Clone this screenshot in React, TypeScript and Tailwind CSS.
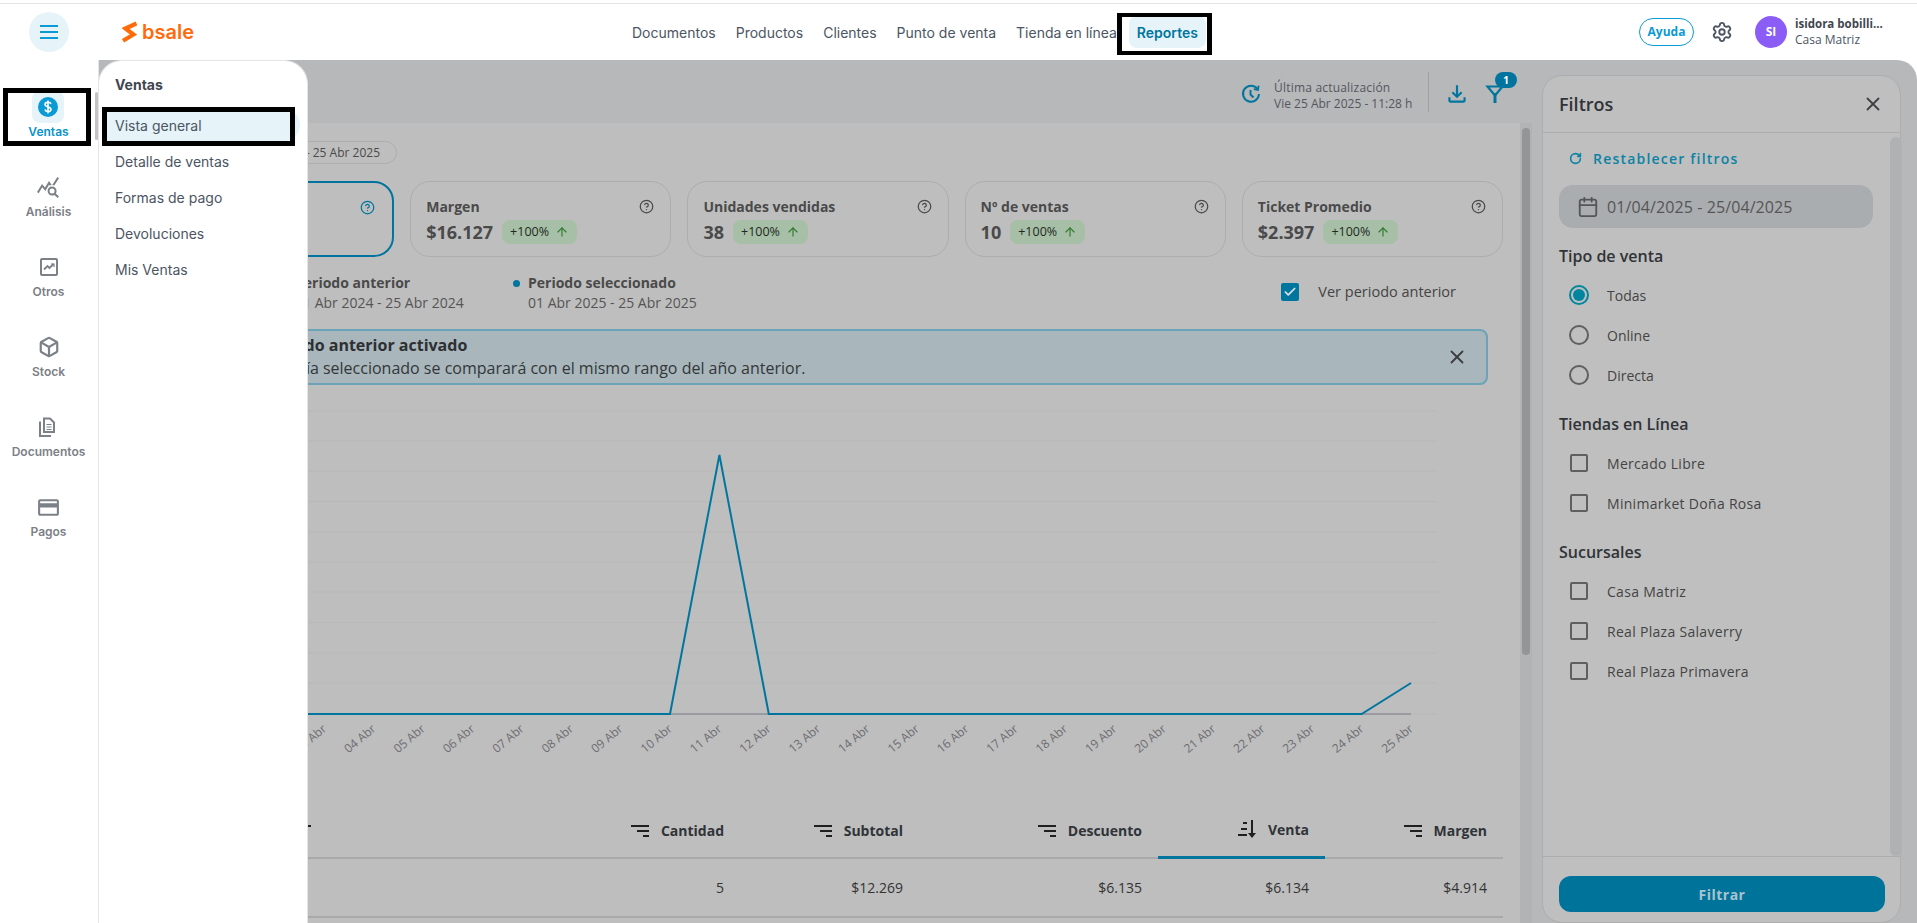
import React from "react";
import { ArrowUp, Box, CircleHelp, RotateCw, Settings, X, Calendar, Check } from "lucide-react";
import { MdCreditCard, MdQueryStats, MdOutlineFileDownload } from "react-icons/md";

const inter = "font-['Inter',sans-serif]";
const noto = "font-['Open_Sans',sans-serif]";

const Logo = () => (
  <div className="flex items-center ml-[53px] w-[71px] text-[#ff6b0a]">
    <svg width="15" height="22" viewBox="0 0 15 22" fill="none" stroke="currentColor" strokeWidth="4.2" className="mr-[5px] shrink-0">
      <polyline points="14.5,2.5 3.5,7.5 11.5,13.5 1,19.8" />
    </svg>
    <span className="font-['Inter',sans-serif] font-semibold text-[20px] leading-none mt-[-1px]">bsale</span>
  </div>
);

const OtrosIcon = () => (
  <svg width="20" height="20" viewBox="0 0 20 20" fill="none" stroke="currentColor">
    <rect x="2" y="2" width="16" height="16" rx="1" strokeWidth="2" />
    <path d="M5 12.5 8.5 9 10.5 11 14.5 7" strokeWidth="1.8" />
    <path d="M12 7h3v3" strokeWidth="1.2" />
  </svg>
);

const DocIcon = () => (
  <svg width="20" height="22" viewBox="0 0 20 22" fill="none" stroke="currentColor" strokeWidth="2">
    <path d="M6 2.5h6l4 4V16H6Z" />
    <path d="M2 5.5V20h11" />
    <path d="M8.5 8.5h5M8.5 11h5M8.5 13.5h5" strokeWidth="1.2" />
  </svg>
);

const railItems = [
  { label: "Análisis", icon: <MdQueryStats size={24} /> },
  { label: "Otros", icon: <OtrosIcon /> },
  { label: "Stock", icon: <Box size={22} strokeWidth={2.4} /> },
  { label: "Documentos", icon: <DocIcon /> },
  { label: "Pagos", icon: <MdCreditCard size={25} /> },
];

const Rail = () => (
  <aside className={`w-[99px] shrink-0 bg-white border-r border-[#e3e5e8] pt-[31px] flex flex-col gap-[31px] items-center pr-px ${inter}`}>
    <div className="flex flex-col items-center">
      <div className="w-8 h-8 rounded-lg bg-[#e6f4f9] flex items-center justify-center">
        <svg width="20" height="20" viewBox="0 0 20 20">
          <circle cx="10" cy="10" r="10" fill="#0a9ad6" />
          <path d="M13 7c-.4-1.2-1.6-1.8-3-1.8-1.7 0-3 .9-3 2.3 0 3 6 1.8 6 4.8 0 1.4-1.3 2.3-3 2.3-1.5 0-2.7-.7-3.1-2M10 3.5v13" fill="none" stroke="#fff" strokeWidth="1.6" />
        </svg>
      </div>
      <span className="text-[12px] leading-4 mt-px font-semibold text-[#0a93cc]">Ventas</span>
    </div>
    {railItems.map((r) => (
      <div key={r.label} className="flex flex-col items-center text-[#7c8087]">
        <div className="w-8 h-8 flex items-center justify-center">{r.icon}</div>
        <span className="text-[12px] leading-4 mt-px font-semibold whitespace-nowrap">{r.label}</span>
      </div>
    ))}
  </aside>
);

const subItems = ["Detalle de ventas", "Formas de pago", "Devoluciones", "Mis Ventas"];

const SubMenu = () => (
  <div className={`absolute left-[98px] top-0 bottom-0 w-[210px] bg-white rounded-t-[24px] border-x border-t border-[#e3e5e8] z-10 ${inter}`}>
    <div className="h-[46px] pl-4 flex items-center text-[14px] font-bold text-[#3f4650]">Ventas</div>
    <div className="ml-[7px] mr-[7px] mt-[2px] h-8 rounded-l-none rounded-r-full bg-[#e6f4f9] pl-[9px] flex items-center text-[14px] text-[#4b5563]">Vista general</div>
    <div className="flex flex-col mt-[2px]">
      {subItems.map((s) => (
        <div key={s} className="h-9 pl-4 flex items-center text-[14px] text-[#4b5563]">{s}</div>
      ))}
    </div>
  </div>
);

const navItems = ["Documentos", "Productos", "Clientes", "Punto de venta", "Tienda en línea"];

const Header = () => (
  <header className={`h-[57px] shrink-0 bg-white border-t border-[#e3e3e3] flex items-center ${inter}`}>
    <div className="ml-[29px] w-10 h-10 rounded-full bg-[#e6f4f9] flex flex-col items-center justify-center gap-1">
      <span className="block w-[18px] h-0.5 bg-[#0a9ad6]" />
      <span className="block w-[18px] h-0.5 bg-[#0a9ad6]" />
      <span className="block w-[18px] h-0.5 bg-[#0a9ad6]" />
    </div>
    <Logo />
    <nav className="ml-[439px] flex items-center gap-[20px] text-[14px] text-[#4b5563]">
      {navItems.map((n) => <span key={n} className="whitespace-nowrap">{n}</span>)}
    </nav>
    <div className="ml-[12px] h-8 w-[77px] rounded-lg bg-[#e6f4f9] flex items-center justify-center text-[14px] font-semibold text-[#00769f]">Reportes</div>
    <div className="ml-auto flex items-center">
      <div className={`w-[55px] h-7 rounded-full border border-[#0a9ad6] flex items-center justify-center text-[12px] font-bold text-[#0a9ad6] ${noto}`}>Ayuda</div>
      <Settings size={22} className="ml-[17px] text-[#4b5563]" />
      <div className={`ml-[22px] w-8 h-8 rounded-full bg-[#8b5cf6] flex items-center justify-center text-white text-[12px] font-bold ${noto}`}>SI</div>
      <div className={`ml-2 w-[122px] flex flex-col ${noto}`}>
        <span className="text-[11.5px] leading-4 font-bold text-[#3f4650] whitespace-nowrap">isidora bobilli...</span>
        <span className="text-[12px] leading-4 text-[#4b5563]">Casa Matriz</span>
      </div>
    </div>
  </header>
);

const HistoryIcon = () => (
  <svg width="20" height="20" viewBox="0 0 20 20" fill="none" stroke="#00769f" strokeWidth="2">
    <path d="M16.5 5A8 8 0 1 0 18 10" />
    <path d="M17.6 1.6 17 6 12.8 5.2" strokeWidth="1.8" />
    <path d="M9.5 6v4.5l3 3" />
  </svg>
);

const FilterIcon = () => (
  <svg width="20" height="20" viewBox="0 0 20 20" fill="none" stroke="#00769f" strokeWidth="2.2">
    <path d="M2.5 2.5h15L10 11.5Z" />
    <path d="M10 9v10" strokeWidth="3" />
  </svg>
);

const TopBar = () => (
  <div className={`h-[63px] shrink-0 flex items-center pt-[5px] pl-[1142px] ${noto}`}>
    <HistoryIcon />
    <div className="ml-[13px] w-[139px] pt-[3px] flex flex-col text-[#52575d] whitespace-nowrap">
      <span className="text-[12px] leading-4 tracking-[0.2px]">Última actualización</span>
      <span className="text-[12px] leading-4">Vie 25 Abr 2025 - 11:28 h</span>
    </div>
    <div className="ml-[15px] h-10 w-px mt-[-5px] bg-[#9fa1a3]" />
    <MdOutlineFileDownload size={26} className="ml-[15px] text-[#00769f]" />
    <div className="relative ml-[15px]">
      <FilterIcon />
      <span className="absolute left-[10px] top-[-12px] w-[22px] h-4 rounded-full bg-[#00749f] text-white text-[10px] font-bold flex items-center justify-center">1</span>
    </div>
  </div>
);

const cards = [
  { t: "Margen", v: "$16.127" },
  { t: "Unidades vendidas", v: "38" },
  { t: "Nº de ventas", v: "10" },
  { t: "Ticket Promedio", v: "$2.397" },
];

const Badge = () => (
  <span className="h-6 w-[75px] rounded-lg bg-[#a6bfa6] flex items-center justify-center gap-[6px] text-[12.5px] text-[#1f2a1f]">
    +100% <ArrowUp size={14} className="text-[#2f7a2f]" />
  </span>
);

const Card = ({ t, v, active }: { t: string; v: string; active?: boolean }) => (
  <div className={`h-[76px] rounded-[20px] pl-[15px] pt-[13px] border ${active ? "pr-[17px] border-2 border-[#00749f]" : "pr-[16px] border-[#adadad]"}`}>
    <div className="flex items-center justify-between h-[22px]">
      <span className="text-[14px] font-bold text-[#4a4a4a]">{t}</span>
      <CircleHelp size={15} className={active ? "text-[#00749f]" : "text-[#4a4a4a]"} />
    </div>
    <div className="flex items-center gap-[9px] mt-[3px]">
      <span className="text-[18px] leading-6 font-bold text-[#4a4a4a]">{v}</span>
      <Badge />
    </div>
  </div>
);

const days = Array.from({ length: 25 }, (_, i) => i + 1);
const gridY = [27, 57, 87, 117.5, 148, 178, 208, 238.5, 269, 299];
const xOf = (d: number) => 537 + 49.4 * (d - 10);

const Chart = () => (
  <svg width="1370" height="432" viewBox="0 0 1370 432" className="block shrink-0">
    {gridY.map((y) => <line key={y} x1="0" x2="1304" y1={y} y2={y} stroke="#b8b8b8" />)}
    <line x1="0" x2="1304" y1="330" y2="330" stroke="#b8b8b8" />
    <line x1="0" x2={xOf(25)} y1="330" y2="330" stroke="#9a9aa2" strokeWidth="2" />
    <polyline
      fill="none"
      stroke="#00769f"
      strokeWidth="2"
      points={`0,330 ${xOf(10)},330 ${xOf(11)},71 ${xOf(12)},330 ${xOf(24)},330 ${xOf(25)},299`}
    />
    {days.map((d) => (
      <text
        key={d}
        x={xOf(d) + 3}
        y={346}
        textAnchor="end"
        transform={`rotate(-40 ${xOf(d) + 3} 346)`}
        fill="#6d6d72"
        fontSize="12"
        fontFamily="Open Sans, sans-serif"
      >
        {String(d).padStart(2, "0")} Abr
      </text>
    ))}
  </svg>
);

const SortIcon = () => (
  <svg width="18" height="12" viewBox="0 0 18 12" fill="#1f1f1f" className="shrink-0">
    <rect x="0" y="0" width="18" height="2" />
    <rect x="6" y="5" width="12" height="2" />
    <rect x="12" y="10" width="6" height="2" />
  </svg>
);

const SortDownIcon = () => (
  <svg width="18" height="18" viewBox="0 0 18 18" fill="#1f1f1f" className="shrink-0">
    <rect x="5" y="2" width="4" height="2" />
    <rect x="3" y="8" width="6" height="2" />
    <rect x="0" y="14" width="9" height="2" />
    <path d="M13 0h2v13h3l-4 5-4-5h3Z" />
  </svg>
);

const headCols = [
  { t: "Cantidad", cls: "pr-4" },
  { t: "Subtotal", cls: "pr-4" },
  { t: "Descuento", cls: "pr-4" },
  { t: "Venta", cls: "pr-4 border-b-[3px] border-[#00769f]", active: true },
  { t: "Margen", cls: "pr-4" },
];

const values = ["5", "$12.269", "$6.135", "$6.134", "$4.914"];

const Table = () => (
  <div className="w-[1370px] shrink-0">
    <div className="grid grid-cols-[400px_207px_179px_239px_167px_178px] h-[43px] border-b-2 border-[#a9a9ab]">
      <div className="flex items-center pl-[160px] pb-[14px]"><span className="-scale-x-100"><SortIcon /></span></div>
      {headCols.map((c) => (
        <div key={c.t} className={`flex items-center justify-end gap-3 pb-[14px] text-[14px] font-bold text-[#303338] h-[43px] ${c.cls}`}>
          {c.active ? <SortDownIcon /> : <SortIcon />}
          <span>{c.t}</span>
        </div>
      ))}
    </div>
    <div className="grid grid-cols-[400px_207px_179px_239px_167px_178px] h-[59px] border-b-2 border-[#a9a9ab]">
      <div />
      {values.map((v) => (
        <div key={v} className="flex items-center justify-end pr-4 text-[14px] text-[#333]">{v}</div>
      ))}
    </div>
  </div>
);

const Content = () => (
  <div className={`flex-1 min-h-0 bg-[#bebebe] flex overflow-hidden ${noto}`}>
    <div className="flex-1 pl-[34px] pr-[17px] pt-[18px] flex flex-col overflow-hidden">
      <div className="self-start h-[23px] w-[264px] rounded-full border border-[#adadad] flex items-center justify-end pr-[16px] text-[12px] text-[#4a4a4a]">
        01 Abr 2025 - 25 Abr 2025
      </div>
      <div className="grid grid-cols-5 gap-4 mt-[17px] w-[1370px] shrink-0">
        <Card t="Venta" v="$24.538" active />
        {cards.map((c) => <Card key={c.t} t={c.t} v={c.v} />)}
      </div>
      <div className="flex mt-[16px] h-10 shrink-0 w-[1370px] relative">
        <div className="ml-[150px] flex">
          <span className="w-[7px] h-[7px] mt-[7px] rounded-full bg-[#8a8a8a] mr-[5px]" />
          <div className="flex flex-col w-[221px]">
            <span className="text-[14px] leading-5 font-bold text-[#4a4a4a]">Periodo anterior</span>
            <span className="text-[14px] leading-5 text-[#555]">01 Abr 2024 - 25 Abr 2024</span>
          </div>
        </div>
        <div className="flex">
          <span className="w-[7px] h-[7px] mt-[7px] ml-[-3px] rounded-full bg-[#00769f] mr-[8px]" />
          <div className="flex flex-col">
            <span className="text-[14px] leading-5 font-bold text-[#4a4a4a]">Periodo seleccionado</span>
            <span className="text-[14px] leading-5 text-[#555]">01 Abr 2025 - 25 Abr 2025</span>
          </div>
        </div>
        <div className="ml-auto mr-[47px] mt-[-1px] h-10 flex items-center">
          <span className="w-[18px] h-[18px] rounded-[2px] bg-[#00769f] flex items-center justify-center">
            <Check size={14} strokeWidth={3} className="text-[#d8e4e8]" />
          </span>
          <span className="ml-[19px] text-[14.5px] text-[#444]">Ver periodo anterior</span>
        </div>
      </div>
      <div className="mt-[16px] ml-[15px] w-[1340px] h-[56px] shrink-0 rounded-lg border-2 border-[#6ba3b8] bg-[#a9b6bb] flex items-center pl-[113px] pr-[18px]">
        <div className="flex-1 flex flex-col">
          <span className="text-[16px] leading-[22px] font-bold text-[#2d2f33]">Periodo anterior activado</span>
          <span className="pl-[16px] text-[16px] leading-[24px] text-[#33363a] whitespace-nowrap">El día seleccionado se comparará con el mismo rango del año anterior.</span>
        </div>
        <X size={22} className="text-[#3a3d40]" />
      </div>
      <div className="mt-[-1px]"><Chart /></div>
      <Table />
    </div>
    <div className="w-[12px] shrink-0 bg-[#b2b3b5] pt-[5px] px-[2px]">
      <div className="h-[527px] rounded-full bg-[#949597]" />
    </div>
  </div>
);

const Radio = ({ label, on }: { label: string; on?: boolean }) => (
  <div className="h-10 flex items-center">
    <span className={`ml-[10px] w-5 h-5 rounded-full border-2 flex items-center justify-center ${on ? "border-[#00859f]" : "border-[#5f5f5f]"}`}>
      {on && <span className="w-3 h-3 rounded-full bg-[#00859f]" />}
    </span>
    <span className="ml-[18px] text-[14px] text-[#444]">{label}</span>
  </div>
);

const Check2 = ({ label }: { label: string }) => (
  <div className="h-10 flex items-center">
    <span className="ml-[11px] w-[18px] h-[18px] rounded-[2px] border-2 border-[#5f5f5f]" />
    <span className="ml-[19px] text-[14px] tracking-[0.3px] text-[#444]">{label}</span>
  </div>
);

const Filters = () => (
  <section className={`ml-[10px] mt-[15px] w-[359px] shrink-0 rounded-[20px] border border-[#adadad] bg-[#bfbfbf] flex flex-col ${noto}`}>
    <div className="h-[57px] shrink-0 border-b border-[#adadad] flex items-center justify-between pl-[16px] pr-[16px]">
      <span className="text-[18px] font-semibold text-[#303338]">Filtros</span>
      <X size={22} className="text-[#3f4245]" />
    </div>
    <div className="flex-1 flex min-h-0">
      <div className="flex-1 pl-[16px] pr-[17px] relative">
        <div className="h-[50px] mb-[2px] flex items-center pl-[10px]">
          <RotateCw size={13} strokeWidth={3} className="text-[#0b83a5]" />
          <span className="ml-[11px] text-[14px] font-semibold tracking-[1.2px] text-[#0b83a5]">Restablecer filtros</span>
        </div>
        <div className="h-[43px] w-[314px] rounded-[14px] bg-[#a9adb0] flex items-center pl-[18px] text-[16px] tracking-[0.1px] text-[#555]">
          <Calendar size={22} className="text-[#555]" />
          <span className="ml-[8px]">01/04/2025 - 25/04/2025</span>
        </div>
        <div className="mt-[16px] h-6 flex items-center text-[16px] font-semibold text-[#303338]">Tipo de venta</div>
        <div className="mt-[7px]">
          <Radio label="Todas" on />
          <Radio label="Online" />
          <Radio label="Directa" />
        </div>
        <div className="mt-[17px] h-6 flex items-center text-[16px] font-semibold text-[#303338]">Tiendas en Línea</div>
        <div className="mt-[7px]">
          <Check2 label="Mercado Libre" />
          <Check2 label="Minimarket Doña Rosa" />
        </div>
        <div className="mt-[17px] h-6 flex items-center text-[16px] font-semibold text-[#303338]">Sucursales</div>
        <div className="mt-[7px]">
          <Check2 label="Casa Matriz" />
          <Check2 label="Real Plaza Salaverry" />
          <Check2 label="Real Plaza Primavera" />
        </div>
      </div>
      <div className="w-[12px] shrink-0 mt-[4px] rounded-t-full rounded-b-full bg-[#b0b1b3]" />
    </div>
    <div className="h-[66px] shrink-0 border-t border-[#adadad] pt-[19px] pl-4 pr-[15px]">
      <div className="h-9 rounded-[12px] bg-[#00739a] flex items-center justify-center text-[14px] font-bold tracking-[0.5px] text-[#a9c4cf]">Filtrar</div>
    </div>
  </section>
);

export default function App() {
  return (
    <div className="relative w-[1917px] h-[923px] overflow-hidden bg-white flex flex-col">
      <div className="h-[3px] shrink-0 bg-white" />
      <Header />
      <div className="flex-1 min-h-0 flex relative">
        <Rail />
        <main className="flex-1 min-w-0 bg-[#b7b8ba] rounded-tr-[20px] flex">
          <div className="w-[1433px] shrink-0 flex flex-col">
            <TopBar />
            <Content />
          </div>
          <Filters />
        </main>
        <div className="absolute left-[95px] top-[32px] w-[3px] h-[48px] rounded-full bg-[#c4c4c4]" />
        <SubMenu />
      </div>
      <div className="absolute left-[3px] top-[88px] w-[88px] h-[58px] border-[5px] border-black z-20" />
      <div className="absolute left-[102px] top-[107px] w-[193px] h-[39px] border-[5px] border-black z-20" />
      <div className="absolute left-[1117px] top-[13px] w-[95px] h-[42px] border-[4px] border-x-[5px] border-black z-20" />
    </div>
  );
}
